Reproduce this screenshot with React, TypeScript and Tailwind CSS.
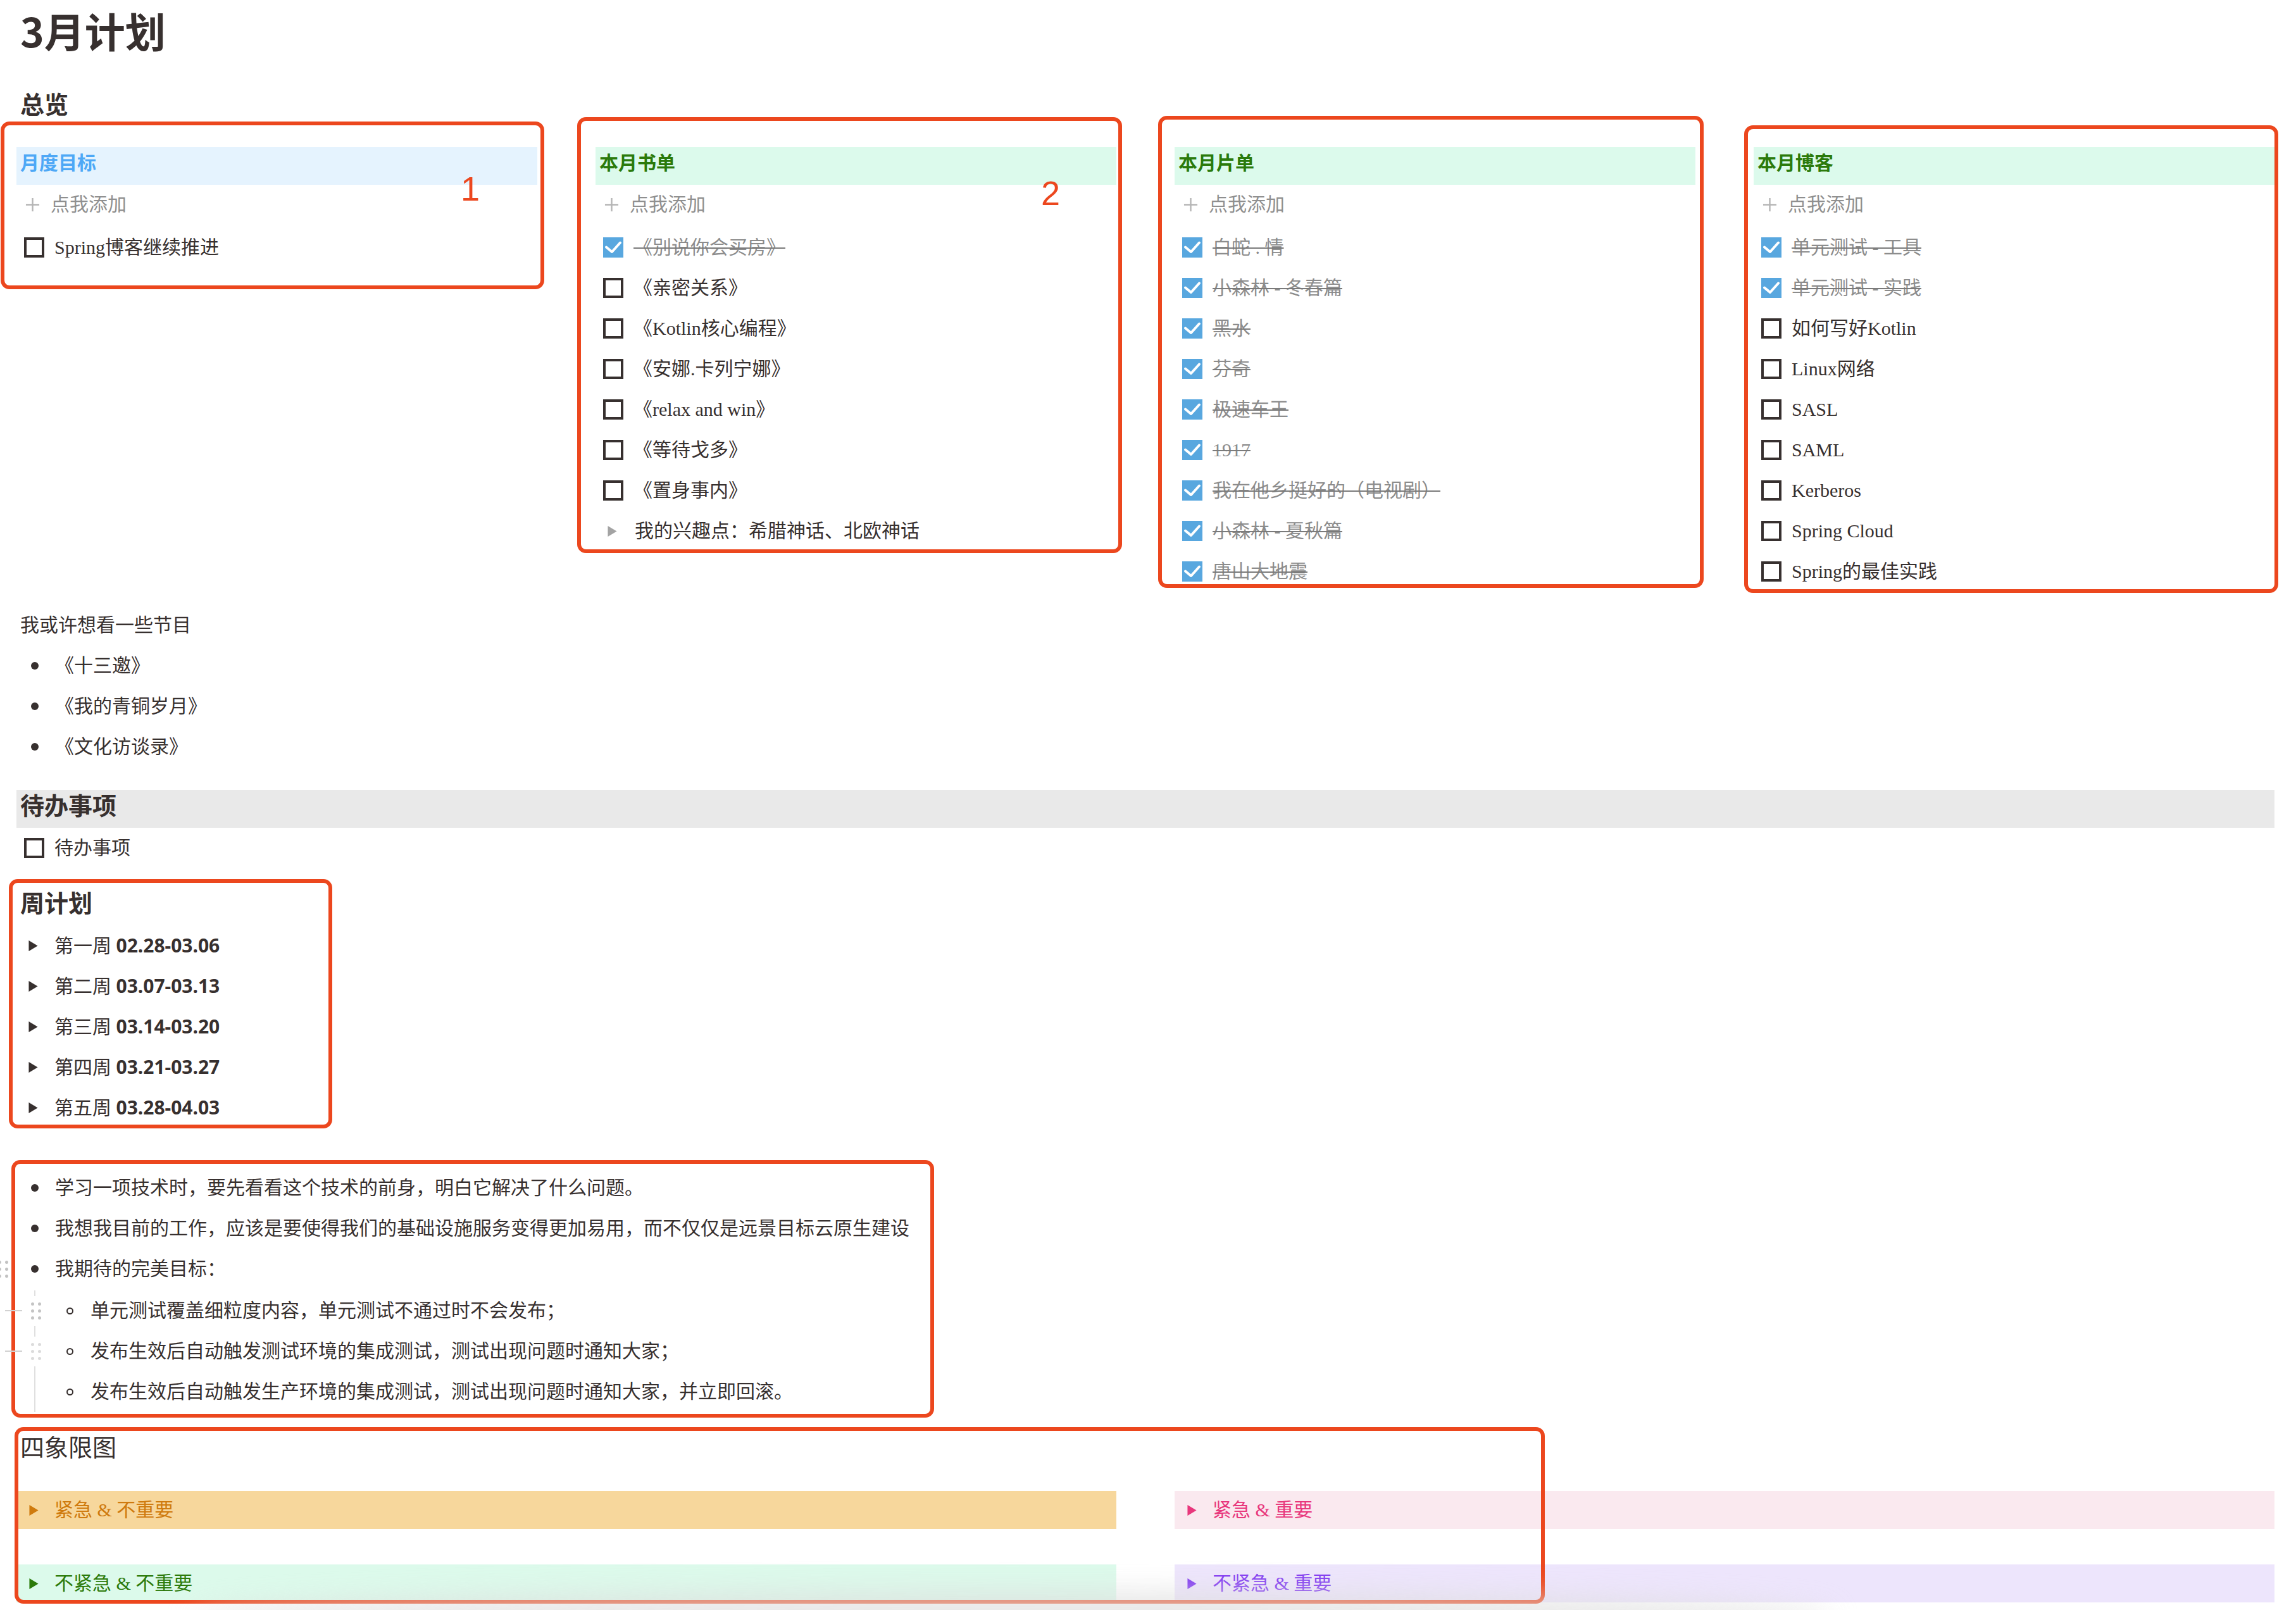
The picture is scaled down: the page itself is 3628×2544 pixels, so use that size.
import React from 'react';

type Item = { text: string; done?: boolean };

const columns: { title: string; tone: 'blue' | 'green'; items: Item[]; toggle?: string }[] = [
  { title: '月度目标', tone: 'blue', items: [{ text: 'Spring博客继续推进' }] },
  {
    title: '本月书单',
    tone: 'green',
    items: [
      { text: '《别说你会买房》', done: true },
      { text: '《亲密关系》' },
      { text: '《Kotlin核心编程》' },
      { text: '《安娜.卡列宁娜》' },
      { text: '《relax and win》' },
      { text: '《等待戈多》' },
      { text: '《置身事内》' },
    ],
    toggle: '我的兴趣点：希腊神话、北欧神话',
  },
  {
    title: '本月片单',
    tone: 'green',
    items: [
      { text: '白蛇 . 情', done: true },
      { text: '小森林 - 冬春篇', done: true },
      { text: '黑水', done: true },
      { text: '芬奇', done: true },
      { text: '极速车王', done: true },
      { text: '1917', done: true },
      { text: '我在他乡挺好的（电视剧）', done: true },
      { text: '小森林 - 夏秋篇', done: true },
      { text: '唐山大地震', done: true },
    ],
  },
  {
    title: '本月博客',
    tone: 'green',
    items: [
      { text: '单元测试 - 工具', done: true },
      { text: '单元测试 - 实践', done: true },
      { text: '如何写好Kotlin' },
      { text: 'Linux网络' },
      { text: 'SASL' },
      { text: 'SAML' },
      { text: 'Kerberos' },
      { text: 'Spring Cloud' },
      { text: 'Spring的最佳实践' },
    ],
  },
];

// each column sits in its own hand-drawn red frame, so the frames differ a little
const frames = [
  '-mt-[2px] h-[265px] w-[859px] pt-[34px] pl-[19px] pr-[5px]',
  'ml-[52px] -mt-[9px] h-[689px] w-[861px] pt-[41px] pl-[23px] pr-[3px]',
  'ml-[57px] -mt-[11px] h-[746px] w-[862px] pt-[43px] pl-[20px] pr-[7px]',
  'ml-[64px] mt-[4px] h-[739px] w-[844px] pt-[28px] pl-[9px] pr-0',
];

const weeks = [
  ['第一周', '02.28-03.06'],
  ['第二周', '03.07-03.13'],
  ['第三周', '03.14-03.20'],
  ['第四周', '03.21-03.27'],
  ['第五周', '03.28-04.03'],
];

const quads = [
  { label: '紧急 & 不重要', band: 'bg-[#f7d79c] text-[#cf7a0d]', fill: '#cf7a0d' },
  { label: '紧急 & 重要', band: 'bg-[#fae9ef] text-[#e8377c]', fill: '#e8377c' },
  { label: '不紧急 & 不重要', band: 'bg-[#dcfaeb] text-[#2c7a0a]', fill: '#2c7a0a' },
  { label: '不紧急 & 重要', band: 'bg-[#ede5fc] text-[#8037f2]', fill: '#8037f2' },
];

function CheckBox({ done }: { done?: boolean }) {
  if (done) {
    return (
      <span className="flex h-[32px] w-[32px] shrink-0 bg-[#58a7df]">
        <svg viewBox="0 0 32 32" className="h-[32px] w-[32px]">
          <path d="M5 15.5l9 7.5L27 8.5" fill="none" stroke="#fff" strokeWidth="4" strokeLinecap="round" strokeLinejoin="round" />
        </svg>
      </span>
    );
  }
  return <span className="h-[32px] w-[32px] shrink-0 border-[4px] border-[#37302f]" />;
}

function Caret({ fill }: { fill: string }) {
  return (
    <svg viewBox="0 0 15 18" className="h-[17px] w-[15px] shrink-0">
      <path d="M0 0L15 9L0 18Z" fill={fill} />
    </svg>
  );
}

function Todo({ text, done }: Item) {
  return (
    <div className="flex h-[64px] items-center pl-[12px]">
      <CheckBox done={done} />
      <span
        className={`ml-[16px] whitespace-nowrap ${
          done ? 'text-[#8c8c8c] line-through decoration-[#7a7a7a] decoration-2' : ''
        }`}
      >
        {text}
      </span>
    </div>
  );
}

function Handle({ tone }: { tone: string }) {
  return (
    <div className="grid grid-cols-2 gap-x-[6px] gap-y-[6px] bg-white py-[10px]">
      {[0, 1, 2, 3, 4, 5].map(i => (
        <span key={i} className={`h-[5px] w-[5px] rounded-full ${tone}`} />
      ))}
    </div>
  );
}

function Bullet({ children, grip }: { children: React.ReactNode; grip?: boolean }) {
  return (
    <div className={`flex h-[64px] items-center ${grip ? '' : 'pl-[23px]'}`}>
      {grip && (
        <div className="-ml-[29px] mr-[36px]">
          <Handle tone="bg-[#c2c2c2]" />
        </div>
      )}
      <span className="h-[12px] w-[12px] shrink-0 rounded-full bg-[#37302f]" />
      <span className="ml-[26px] whitespace-nowrap">{children}</span>
    </div>
  );
}

function SubBullet({ children, grip }: { children: React.ReactNode; grip?: string }) {
  return (
    <div className="-ml-[48px] flex h-[64px] items-center">
      <span className={`h-[2px] w-[27px] shrink-0 ${grip ? 'bg-[#d2d2d2]' : ''}`} />
      <div className={`ml-[14px] ${grip ? '' : 'invisible'}`}>
        <Handle tone={grip ?? ''} />
      </div>
      <span className="ml-[40px] h-[11px] w-[11px] shrink-0 rounded-full border-2 border-[#37302f]" />
      <span className="ml-[27px] whitespace-nowrap">{children}</span>
    </div>
  );
}

export default function App() {
  return (
    <div className="relative h-[2544px] w-[3628px] overflow-hidden bg-white pl-[26px] pr-[34px] font-['Liberation_Serif','Noto_Sans_CJK_SC',serif] text-[30px] leading-none text-[#37302f]">
      <h1 className="flex h-[96px] items-center pl-[6px] font-['Noto_Sans_CJK_SC',sans-serif] text-[64px] leading-[1.4] font-bold">
        3月计划
      </h1>
      <h3 className="mt-[42px] flex h-[56px] items-center pl-[6px] text-[38px] font-bold">总览</h3>

      {/* overview columns */}
      <div className="-ml-[25px] flex items-start">
        {columns.map((col, i) => (
          <div key={col.title} className={`relative shrink-0 rounded-[14px] border-[6px] border-[#ec471e] ${frames[i]}`}>
            <div
              className={`flex h-[60px] items-center px-[6px] pb-[8px] font-bold ${
                col.tone === 'blue' ? 'bg-[#e5f3fe] text-[#4ea8f6]' : 'bg-[#dcfaec] text-[#2b7a0b]'
              }`}
            >
              {col.title}
            </div>
            <div className="flex h-[62px] items-center pl-[14px] text-[#8f8f8f]">
              <svg viewBox="0 0 24 24" className="h-[23px] w-[23px]">
                <path d="M12 1v22M1 12h22" stroke="#b5b5b5" strokeWidth="2.5" fill="none" />
              </svg>
              <span className="ml-[17px]">点我添加</span>
            </div>
            <div className="mt-[5px]">
              {col.items.map(it => (
                <Todo key={it.text} text={it.text} done={it.done} />
              ))}
              {col.toggle && (
                <div className="flex h-[64px] items-center pl-[19px]">
                  <Caret fill="#a3a3a3" />
                  <span className="ml-[28px] whitespace-nowrap">{col.toggle}</span>
                </div>
              )}
            </div>
            {i === 0 && (
              <span className="absolute left-[721px] top-[73px] font-['Liberation_Sans',sans-serif] text-[54px] text-[#ec471e]">1</span>
            )}
            {i === 1 && (
              <span className="absolute left-[727px] top-[87px] font-['Liberation_Sans',sans-serif] text-[54px] text-[#ec471e]">2</span>
            )}
          </div>
        ))}
      </div>

      {/* shows */}
      <p className="mt-[19px] flex h-[64px] items-center pl-[6px]">我或许想看一些节目</p>
      <Bullet>《十三邀》</Bullet>
      <Bullet>《我的青铜岁月》</Bullet>
      <Bullet>《文化访谈录》</Bullet>

      {/* todo */}
      <h3 className="mt-[36px] flex h-[60px] items-center bg-[#e9e9e9] pb-[8px] pl-[6px] text-[38px] font-bold">待办事项</h3>
      <Todo text="待办事项" />

      {/* weekly plan */}
      <section className="-ml-[12px] mt-[17px] h-[394px] w-[511px] rounded-[14px] border-[6px] border-[#ec471e] pl-[6px] pt-[5px]">
        <h3 className="flex h-[56px] items-center pl-[6px] text-[38px] font-semibold">周计划</h3>
        <div className="mt-[6px]">
          {weeks.map(([w, d]) => (
            <div key={w} className="flex h-[64px] items-center pl-[19px]">
              <Caret fill="#37302f" />
              <span className="ml-[26px] whitespace-nowrap">
                {w} <span className="font-['Noto_Sans',sans-serif] font-bold">{d}</span>
              </span>
            </div>
          ))}
        </div>
      </section>

      {/* notes */}
      <section className="-ml-[8px] mt-[50px] h-[407px] w-[1458px] rounded-[14px] border-[6px] border-[#ec471e] pl-[2px] pt-[6px]">
        <Bullet>学习一项技术时，要先看看这个技术的前身，明白它解决了什么问题。</Bullet>
        <Bullet>我想我目前的工作，应该是要使得我们的基础设施服务变得更加易用，而不仅仅是远景目标云原生建设</Bullet>
        <Bullet grip>我期待的完美目标：</Bullet>
        <div className="ml-[28px] mt-[2px] border-l-2 border-[#e0e0e0]">
          <SubBullet grip="bg-[#c4c4c4]">单元测试覆盖细粒度内容，单元测试不通过时不会发布；</SubBullet>
          <SubBullet grip="bg-[#dcdcdc]">发布生效后自动触发测试环境的集成测试，测试出现问题时通知大家；</SubBullet>
          <SubBullet>发布生效后自动触发生产环境的集成测试，测试出现问题时通知大家，并立即回滚。</SubBullet>
        </div>
      </section>

      {/* quadrant */}
      <section className="relative mt-[20px]">
        <h3 className="flex h-[56px] items-center pl-[6px] text-[38px]">四象限图</h3>
        <div className="mt-[40px] grid grid-cols-2 gap-x-[92px] gap-y-[56px]">
          {quads.map(q => (
            <div key={q.label} className={`flex h-[60px] items-center pl-[20px] ${q.band}`}>
              <Caret fill={q.fill} />
              <span className="ml-[25px] whitespace-nowrap">{q.label}</span>
            </div>
          ))}
        </div>
        <div className="pointer-events-none absolute -left-[3px] -top-[5px] h-[279px] w-[2418px] rounded-[14px] border-[6px] border-[#ec471e]" />
      </section>

      {/* faint shadow along the bottom edge */}
      <div className="pointer-events-none absolute bottom-[-50px] left-[300px] h-[80px] w-[2600px] rounded-[50%] bg-[#dedede] opacity-70 blur-[22px]" />
    </div>
  );
}
